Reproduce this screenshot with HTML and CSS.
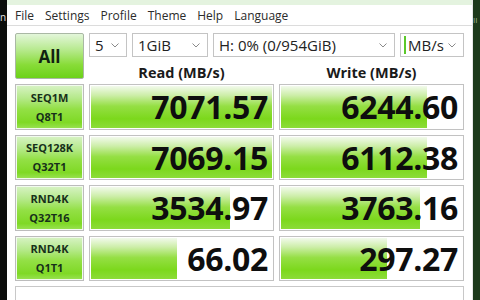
FILE: index.html
```html
<!DOCTYPE html>
<html lang="en">
  <head>
    <meta charset="UTF-8" />
    <title>CrystalDiskMark</title>
    <link rel="stylesheet" href="styles.css">
  </head>
  <body>
    <div class="screen">
      <div class="edge-left"><span>n</span></div>

      <div class="window">
        <div class="title-strip"></div>

        <div class="menu-bar">
          <span>File</span>
          <span>Settings</span>
          <span>Profile</span>
          <span>Theme</span>
          <span>Help</span>
          <span>Language</span>
        </div>

        <div class="bench">
          <button class="all-btn">All</button>

          <div class="controls">
            <div class="combo combo-count">5 <svg class="chev" viewBox="0 0 8 5"><path d="M0.5 0.5 L4 4 L7.5 0.5" /></svg></div>
            <div class="combo combo-size">1GiB <svg class="chev" viewBox="0 0 8 5"><path d="M0.5 0.5 L4 4 L7.5 0.5" /></svg></div>
            <div class="combo combo-drive">H: 0% (0/954GiB) <svg class="chev" viewBox="0 0 8 5"><path d="M0.5 0.5 L4 4 L7.5 0.5" /></svg></div>
            <div class="combo combo-unit"><span class="caret"></span>MB/s <svg class="chev" viewBox="0 0 8 5"><path d="M0.5 0.5 L4 4 L7.5 0.5" /></svg></div>
          </div>

          <div class="col-head head-read">Read (MB/s)</div>
          <div class="col-head head-write">Write (MB/s)</div>

          <div class="test-label">SEQ1M<br>Q8T1</div>
          <div class="result"><div class="bar" style="width: 100%"></div><span>7071.57</span></div>
          <div class="result"><div class="bar" style="width: 80%"></div><span>6244.60</span></div>

          <div class="test-label">SEQ128K<br>Q32T1</div>
          <div class="result"><div class="bar" style="width: 100%"></div><span>7069.15</span></div>
          <div class="result"><div class="bar" style="width: 80%"></div><span>6112.38</span></div>

          <div class="test-label">RND4K<br>Q32T16</div>
          <div class="result"><div class="bar" style="width: 76%"></div><span>3534.97</span></div>
          <div class="result"><div class="bar" style="width: 76%"></div><span>3763.16</span></div>

          <div class="test-label">RND4K<br>Q1T1</div>
          <div class="result"><div class="bar" style="width: 47%"></div><span>66.02</span></div>
          <div class="result"><div class="bar" style="width: 58%"></div><span>297.27</span></div>

          <div class="comment"></div>
        </div>
      </div>

      <div class="edge-right"><span>II</span></div>
    </div>
  </body>
</html>
```

FILE: styles.css
```css
body {
  margin: 0;
  width: 480px;
  height: 300px;
  overflow: hidden;
  font-family: "Open Sans", "Noto Sans", sans-serif;
  background: #ffffff;
}

.screen {
  display: flex;
  height: 300px;
}

.edge-left {
  width: 7px;
  background: #0b0d0b;
  color: #e0e0e0;
  font-size: 10px;
  line-height: 12px;
  padding-top: 11px;
  box-sizing: border-box;
}

.edge-right {
  width: 8px;
  background: #1d3a1b;
  color: #9fb89c;
  font-size: 8px;
  padding-top: 14px;
  box-sizing: border-box;
  border-left: 1px solid #e6e6e6;
}

.window {
  flex: 1;
  background: #ffffff;
  overflow: hidden;
}

.title-strip {
  height: 5px;
  background: #e4f3df;
}

.menu-bar {
  height: 20px;
  display: flex;
  align-items: center;
  gap: 11px;
  padding-left: 8px;
  font-size: 12px;
  color: #2b2b2b;
  border-bottom: 1px solid #dcdcdc;
}

.bench {
  display: grid;
  grid-template-columns: 69px 185px 185px;
  grid-template-rows: 24px 17px repeat(4, 45.5px) 20px;
  column-gap: 5px;
  row-gap: 5px;
  padding: 7px 8px 0 8px;
}

.all-btn {
  grid-row: 1 / 3;
  grid-column: 1;
  border: 1px solid #a9b8a4;
  border-radius: 2px;
  background: linear-gradient(to bottom, #e3f6da 0%, #b8ea90 35%, #88dc38 70%, #6cd218 100%);
  font-family: "Open Sans", sans-serif;
  font-weight: 700;
  font-size: 17px;
  color: #112211;
  padding: 0;
  margin: 0;
}

.controls {
  grid-column: 2 / 4;
  display: flex;
  gap: 5px;
}

.combo {
  box-sizing: border-box;
  height: 24px;
  border: 1px solid #c4c4c4;
  display: flex;
  align-items: center;
  padding-left: 5px;
  padding-right: 7px;
  font-size: 15px;
  color: #222;
}

.combo-count { width: 38px; }
.combo-size { width: 76px; }
.combo-drive { width: 182px; }
.combo-unit { width: 64px; padding-left: 3px; }

.caret {
  width: 2px;
  height: 18px;
  background: #5cc82a;
  margin-right: 2px;
}

.chev {
  width: 8px;
  height: 5px;
  margin-left: auto;
  fill: none;
  stroke: #8a8a8a;
  stroke-width: 1;
}

.col-head {
  font-weight: 700;
  font-size: 14.5px;
  color: #1a1a1a;
  text-align: center;
  line-height: 21px;
}

.head-read { grid-column: 2; }
.head-write { grid-column: 3; }

.test-label {
  border: 1px solid #bcbcbc;
  box-shadow: inset 0 0 0 1px #f2fbee;
  background: linear-gradient(to bottom, #d8f3c6 0%, #b5e98a 30%, #93e045 55%, #7fd925 85%, #9be256 100%);
  font-weight: 700;
  font-size: 11px;
  line-height: 19px;
  color: #17301a;
  text-align: center;
  display: flex;
  align-items: center;
  justify-content: center;
}

.result {
  position: relative;
  border: 1px solid #c2c2c2;
  box-shadow: inset 0 0 0 1px #ffffff;
  background: #ffffff;
  overflow: hidden;
  display: flex;
  align-items: center;
  justify-content: flex-end;
}

.bar {
  position: absolute;
  left: 1px;
  top: 1px;
  bottom: 1px;
  max-width: calc(100% - 2px);
  background: linear-gradient(to bottom, #f2faec 0%, #cdeea9 22%, #95df44 48%, #7cd81c 78%, #8cdc38 100%);
}

.result span {
  position: relative;
  font-weight: 700;
  font-size: 32px;
  color: #0e0e0e;
  padding-right: 5px;
  letter-spacing: -0.3px;
}

.comment {
  grid-column: 1 / 4;
  border: 1px solid #c8c8c8;
  border-bottom: none;
}
```
